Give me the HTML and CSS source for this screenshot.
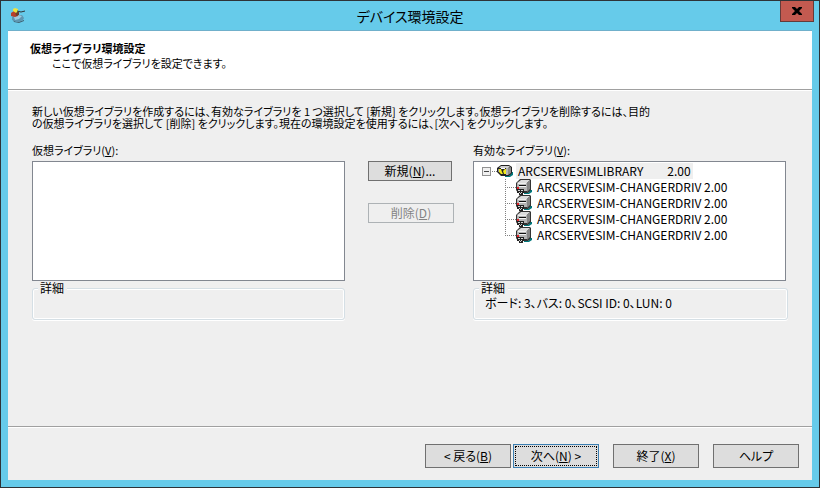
FILE: index.html
```html
<!DOCTYPE html>
<html lang="ja">
<head>
    <meta charset="UTF-8">
    <meta name="viewport" content="width=device-width, initial-scale=1.0">
    <title>デバイス環境設定</title>
    <link rel="stylesheet" href="styles.css">
</head>
<body>
    <!-- Shared icons -->
    <svg class="icon-defs" aria-hidden="true">
        <symbol id="icon-drive" viewBox="0 0 16 16">
            <path d="M14 11h2v2l-3 2H8v-1h4z" fill="#00787c"/>
            <path d="M0 4l4-4h10l1 1v10l-3 3H2l-2-3z" fill="#333"/>
            <path d="M1 4l4-3h9l-3 3z" fill="#dcdcdc"/>
            <path d="M1 4h10v8H3l-2-2z" fill="#b4b4b4"/>
            <path d="M11 4l3-3v9l-3 3z" fill="#858585"/>
            <path d="M2 4h8v1H2z" fill="#efefef"/>
            <path d="M3 6h7v1H3z" fill="#111"/>
            <path d="M3 7h7v1H3z" fill="#f4f4f4"/>
            <path d="M1 8h2v2H1z" fill="#e0222a"/>
            <path d="M1 10h7v4H7v2H3v-2H1z" fill="#222"/>
            <path d="M2 11h2v1H2zM5 11h2v1H5zM3 13h1v1H3zM5 13h1v1H5zM4 14h1v1H4z" fill="#d6d6d6"/>
        </symbol>
    </svg>

    <div class="window">
        <div class="titlebar">
            <svg class="app-icon" viewBox="0 0 16 16" aria-hidden="true">
                <path d="M3 13l5 2 6-2v1l-5 2-5-1z" fill="#3f6272"/>
                <path d="M2 10l3-2h7l2 3-1 2-4 2H6l-4-2z" fill="#5e97b2"/>
                <path d="M4 10l4-2 4 1-3 3-4 1z" fill="#9bcbe0"/>
                <path d="M1 6l3-2 4 1v4l-3 1-4-1z" fill="#b8402c"/>
                <path d="M5 4l4 1v3L6 9z" fill="#6b4030"/>
                <path d="M3 2l2-1 3 1v2L6 6 3 4z" fill="#f0e540"/>
                <path d="M7 4l4 1 4-1" fill="none" stroke="#2f3436"/>
            </svg>
            <h1>デバイス環境設定</h1>
            <button type="button" class="close-btn" aria-label="閉じる">
                <svg viewBox="0 0 10 8" aria-hidden="true">
                    <path d="M0 0h3l2 2 2-2h3v1L7 4l3 3v1H7L5 6 3 8H0V7l3-3-3-3z" fill="#000"/>
                </svg>
            </button>
        </div>

        <div class="wizard">
            <div class="header">
                <h2>仮想ライブラリ環境設定</h2>
                <p>ここで仮想ライブラリを設定できます。</p>
            </div>

            <div class="content">
                <p class="description">新しい仮想ライブラリを作成するには、有効なライブラリを 1 つ選択して [新規] をクリックします。仮想ライブラリを削除するには、目的<br>の仮想ライブラリを選択して [削除] をクリックします。現在の環境設定を使用するには、[次へ] をクリックします。</p>

                <div class="columns">
                    <div class="column">
                        <div class="list-label" id="virtualLabel">仮想ライブラリ(<u>V</u>):</div>
                        <ul class="list-box" role="tree" aria-labelledby="virtualLabel"></ul>
                        <fieldset>
                            <legend>詳細</legend>
                        </fieldset>
                    </div>

                    <div class="actions">
                        <button type="button" class="new-btn">新規(<u>N</u>)...</button>
                        <button type="button" disabled>削除(<u>D</u>)</button>
                    </div>

                    <div class="column">
                        <div class="list-label" id="availableLabel">有効なライブラリ(<u>V</u>):</div>
                        <ul class="list-box" role="tree" aria-labelledby="availableLabel">
                            <li role="treeitem" aria-expanded="true">
                                <div class="tree-row">
                                    <button type="button" class="expander" aria-label="折りたたむ"></button>
                                    <span class="root-branch"></span>
                                    <svg class="tree-icon" viewBox="0 0 16 16" aria-hidden="true">
                                        <path d="M14 9h2v3l-3 2H8v-1h4z" fill="#00787c"/>
                                        <path d="M0 5l4-3h8l3 2v6l-3 3H4L0 9z" fill="#222"/>
                                        <path d="M4 3h8l1 1-2 1H2z" fill="#d0d0d0"/>
                                        <path d="M11 5l3-1v6l-3 2z" fill="#8c8c8c"/>
                                        <path d="M9 5h2v7H9z" fill="#b4b4b4"/>
                                        <path d="M1 6h1v3H1z" fill="#8a8a8a"/>
                                        <path d="M2 6h2l1 3 1 2H4L2 9zM6 8l2-2h1v5H7z" fill="#f2ea1c"/>
                                        <path d="M4 5h4v1H4z" fill="#fff"/>
                                    </svg>
                                    <span class="tree-text selected"><span>ARCSERVESIMLIBRARY</span><span>2.00</span></span>
                                </div>
                                <ul class="tree-children" role="group">
                                    <li class="tree-row" role="treeitem">
                                        <span class="branch"></span>
                                        <svg class="tree-icon" aria-hidden="true"><use href="#icon-drive"/></svg>
                                        <span class="tree-text">ARCSERVESIM-CHANGERDRIV 2.00</span>
                                    </li>
                                    <li class="tree-row" role="treeitem">
                                        <span class="branch"></span>
                                        <svg class="tree-icon" aria-hidden="true"><use href="#icon-drive"/></svg>
                                        <span class="tree-text">ARCSERVESIM-CHANGERDRIV 2.00</span>
                                    </li>
                                    <li class="tree-row" role="treeitem">
                                        <span class="branch"></span>
                                        <svg class="tree-icon" aria-hidden="true"><use href="#icon-drive"/></svg>
                                        <span class="tree-text">ARCSERVESIM-CHANGERDRIV 2.00</span>
                                    </li>
                                    <li class="tree-row" role="treeitem">
                                        <span class="branch"></span>
                                        <svg class="tree-icon" aria-hidden="true"><use href="#icon-drive"/></svg>
                                        <span class="tree-text">ARCSERVESIM-CHANGERDRIV 2.00</span>
                                    </li>
                                </ul>
                            </li>
                        </ul>
                        <fieldset class="wide">
                            <legend>詳細</legend>
                            <p>ボード: 3、バス: 0、SCSI ID: 0、LUN: 0</p>
                        </fieldset>
                    </div>
                </div>
            </div>

            <div class="footer">
                <button type="button">&lt; 戻る(<u>B</u>)</button>
                <button type="button" class="default-btn">次へ(<u>N</u>) &gt;</button>
                <button type="button" class="spaced">終了(<u>X</u>)</button>
                <button type="button" class="spaced">ヘルプ</button>
            </div>
        </div>
    </div>
</body>
</html>
```

FILE: styles.css
```css
* {
    box-sizing: border-box;
}
body {
    margin: 0;
    font-family: "Noto Sans CJK JP", sans-serif;
    font-size: 12px;
    line-height: 12px;
    font-feature-settings: "palt";
    color: #000;
}
h1, h2, p, ul {
    margin: 0;
    padding: 0;
}
ul {
    list-style: none;
}
.icon-defs {
    display: none;
}
.window {
    display: flex;
    flex-direction: column;
    min-height: 100vh;
    padding: 0 7px 7px;
    border: 1px solid #2e3337;
    background-color: #66cbea;
}

/* Title bar */
.titlebar {
    display: grid;
    grid-template-columns: 34px 1fr 34px;
    align-items: start;
    height: 30px;
    border-bottom: 1px solid #70b0cb;
}
.app-icon {
    width: 16px;
    height: 16px;
    margin: 6px 2px;
}
.titlebar h1 {
    font-size: 14px;
    font-weight: normal;
    line-height: 30px;
    text-align: center;
}
.close-btn {
    display: flex;
    align-items: center;
    justify-content: center;
    width: 34px;
    height: 21px;
    margin-left: 2px;
    padding: 0;
    border: 1px solid #643b3a;
    border-top: none;
    background-color: #c35a50;
}
.close-btn svg {
    width: 10px;
    height: 8px;
}

/* Wizard page */
.wizard {
    flex: 1;
    display: flex;
    flex-direction: column;
    background-color: #efefef;
}
.header {
    height: 59px;
    padding: 10px 22px;
    border-bottom: 1px solid #a0a0a0;
    background-color: #fff;
    box-shadow: 0 1px #fff;
}
.header h2 {
    font-size: 11px;
    line-height: 15px;
}
.header p {
    padding-left: 22px;
    font-size: 11px;
    line-height: 15px;
}
.content {
    flex: 1;
    padding: 15px 26px 0 24px;
}
.description {
    font-size: 11px;
    white-space: nowrap;
}
.columns {
    display: grid;
    grid-template-columns: 1fr 128px 1fr;
    margin-top: 12px;
}
.list-label {
    height: 20px;
    font-size: 11px;
    line-height: 18px;
}
.list-box {
    height: 120px;
    padding-top: 1px;
    border: 1px solid #828790;
    background-color: #fff;
}
fieldset {
    height: 38px;
    margin: 1px 0 0;
    padding: 3px 11px;
    border: 1px solid #d5dfe5;
    border-radius: 3px;
    box-shadow: inset 0 0 0 1px #fff, 0 1px #fff;
}
fieldset.wide {
    margin-right: -2px;
}
legend {
    padding: 0 3px 0 2px;
    margin-left: -6px;
    background-color: #efefef;
}
.actions {
    display: flex;
    flex-direction: column;
    gap: 22px;
    padding: 20px 19px 0 23px;
}
button {
    font: inherit;
    font-feature-settings: inherit;
    color: #000;
    height: 20px;
    padding: 0;
    border: 1px solid #707070;
    background-color: #ddd;
}
button:disabled {
    color: #838383;
    border-color: #adb2b5;
    background-color: #efefef;
}
.new-btn {
    margin-right: 2px;
}

/* Library tree */
.tree-row {
    display: flex;
    align-items: center;
    height: 16px;
    white-space: nowrap;
}
.expander {
    width: 9px;
    height: 9px;
    margin-left: 8px;
    border-color: #919191;
    background: linear-gradient(#444, #444) center / 5px 1px no-repeat #f0f0f0;
}
.root-branch {
    width: 6px;
    height: 1px;
    background: repeating-linear-gradient(90deg, #fff 0 1px, #808080 1px 2px);
}
.tree-icon {
    width: 16px;
    height: 16px;
}
.tree-text {
    line-height: 16px;
    margin-left: 3px;
    padding: 0 2px;
}
.selected {
    display: flex;
    gap: 24px;
    background-color: #efefef;
}
.tree-children {
    padding-left: 31px;
}
.branch {
    width: 11px;
    height: 16px;
    background:
        repeating-linear-gradient(#808080 0 1px, transparent 1px 2px) left top / 1px 16px no-repeat,
        repeating-linear-gradient(90deg, #808080 0 1px, transparent 1px 2px) left center / 11px 1px no-repeat;
}
.tree-row:last-child .branch {
    background-size: 1px 8px, 11px 1px;
}

/* Bottom buttons */
.footer {
    display: flex;
    justify-content: flex-end;
    gap: 2px;
    padding: 17px 13px 12px;
    border-top: 1px solid #a0a0a0;
    box-shadow: inset 0 1px #fff;
}
.footer button {
    width: 86px;
    height: 24px;
}
.footer .spaced {
    margin-left: 12px;
}
.footer .default-btn {
    border-color: #3c7fb1;
    outline: 1px dotted #000;
    outline-offset: -3px;
}
```
